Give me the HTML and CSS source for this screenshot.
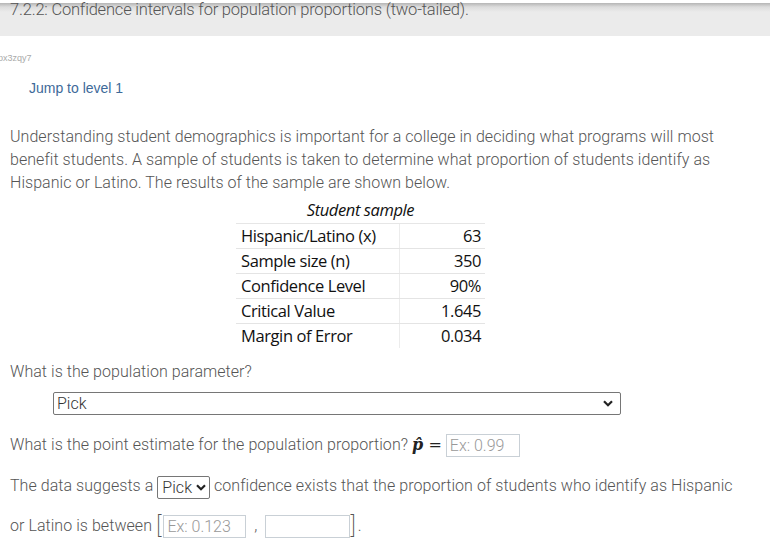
FILE: index.html
```html
<!DOCTYPE html>
<html>
<head>
<meta charset="utf-8">
<link rel="stylesheet" href="styles.css">
</head>
<body>
<div class="topbar">
  <h2 class="title">7.2.2: Confidence intervals for population proportions (two-tailed).</h2>
</div>
<div class="code">px3zqy7</div>
<a class="jump" href="#">Jump to level 1</a>
<div class="content">
  <p class="intro">Understanding student demographics is important for a college in deciding what programs will most benefit students. A sample of students is taken to determine what proportion of students identify as Hispanic or Latino. The results of the sample are shown below.</p>
  <div class="table-wrap">
    <table class="sample">
      <caption>Student sample</caption>
      <tr><td>Hispanic/Latino (x)</td><td class="num">63</td></tr>
      <tr><td>Sample size (n)</td><td class="num">350</td></tr>
      <tr><td>Confidence Level</td><td class="num">90%</td></tr>
      <tr><td>Critical Value</td><td class="num">1.645</td></tr>
      <tr><td>Margin of Error</td><td class="num">0.034</td></tr>
    </table>
  </div>
  <p class="q q1">What is the population parameter?</p>
  <div class="sel-row">
    <div class="select wide"><span>Pick</span><svg class="chev" viewBox="0 0 10 7" width="10" height="7"><path d="M1 1.2 L5 5.2 L9 1.2" fill="none" stroke="#222" stroke-width="2.2"/></svg></div>
  </div>
  <p class="q q2">What is the point estimate for the population proportion? <span class="math"><i>p&#770;</i> =</span> <span class="input w74 ph">Ex: 0.99</span></p>
  <p class="q q3">The data suggests a <span class="select small"><span>Pick</span><svg class="chev" viewBox="0 0 10 7" width="10" height="7"><path d="M1 1.2 L5 5.2 L9 1.2" fill="none" stroke="#222" stroke-width="2.2"/></svg></span> confidence exists that the proportion of students who identify as Hispanic</p>
  <p class="q q4">or Latino is between <span class="br">[</span><span class="input w83 ph">Ex: 0.123</span> <span class="comma">,</span> <span class="input w85"></span><span class="br">]</span>.</p>
</div>
</body>
</html>
```

FILE: styles.css
```css
html, body {
  margin: 0;
  padding: 0;
  background: #fff;
}
body {
  font-family: Roboto, "Liberation Sans", sans-serif;
  font-weight: 300;
  color: #555;
  overflow: hidden;
}
.topbar {
  margin-top: 3px;
  height: 33px;
  background: linear-gradient(#b5b5b5 0, #dcdcdc 4px, #ebebeb 9px, #ebebeb 100%);
}
.title {
  margin: 0;
  padding-left: 10px;
  font-size: 16.5px;
  font-weight: 300;
  line-height: 17px;
  letter-spacing: -0.2px;
  color: #555;
  transform: translateY(-2px);
}
.code {
  margin: 17px 0 0 -2px;
  font-size: 9px;
  color: #aaa;
  font-family: "Liberation Sans", Arial, sans-serif;
  font-weight: 400;
  line-height: 11px;
}
.jump {
  display: block;
  margin: 15px 0 0 29px;
  font-family: "Liberation Sans", Arial, sans-serif;
  font-weight: 400;
  font-size: 14px;
  line-height: 18px;
  color: #3e6a99;
  text-decoration: none;
}
.content {
  padding: 0 10px;
}
.intro {
  margin: 28px 0 0 0;
  width: 715px;
  font-size: 16px;
  line-height: 23px;
  letter-spacing: 0.05px;
}
.table-wrap {
  display: flex;
  padding-left: 226px;
  margin-top: 5px;
}
.sample {
  border-collapse: collapse;
  font-family: "Open Sans", Lato, sans-serif;
  font-weight: 400;
  font-size: 16.5px;
  color: #111;
  background: #fff;
}
.sample caption {
  font-style: italic;
  font-size: 16.5px;
  line-height: 22px;
  height: 24px;
  border-bottom: 1px solid #e6e6e6;
  text-align: center;
  letter-spacing: -0.4px;
}
.sample td {
  height: 24px;
  padding: 0 4px 0 5px;
  border-bottom: 1px solid #e4e4e4;
  line-height: 24px;
  letter-spacing: -0.4px;
}
.sample tr:last-child td {
  border-bottom: none;
}
.sample td:first-child {
  width: 154px;
  border-right: 1px solid #ececec;
}
.sample td.num {
  text-align: right;
  width: 76px;
}
.q {
  margin: 0;
  font-size: 16px;
  line-height: 22px;
  letter-spacing: 0.05px;
}
.q1 {
  margin-top: 13px;
}
.sel-row {
  margin: 9px 0 0 43px;
}
.select {
  display: inline-flex;
  align-items: center;
  justify-content: space-between;
  box-sizing: border-box;
  border: 1px solid #767676;
  border-radius: 2px;
  background: #fff;
  font-family: Roboto, "Liberation Sans", sans-serif;
  font-weight: 300;
  color: #333;
  vertical-align: middle;
}
.select.wide {
  width: 568px;
  height: 23px;
  padding: 0 7px 0 3px;
  font-size: 16px;
}
.select.small {
  height: 23px;
  padding: 0 3px 0 4px;
  font-size: 16px;
  gap: 4px;
}
.chev {
  display: block;
}
.q2 {
  margin-top: 19px;
}
.math {
  font-family: "DejaVu Serif", serif;
  font-weight: 400;
  color: #222;
}
.math i {
  font-weight: 700;
}
.input {
  display: inline-block;
  box-sizing: border-box;
  height: 23px;
  border: 1px solid #c9d0d6;
  vertical-align: middle;
  font-size: 16px;
  line-height: 21px;
  padding-left: 3px;
  color: #999;
  background: #fff;
  letter-spacing: 0;
}
.w74 { width: 74px; }
.w83 { width: 83px; }
.w85 { width: 85px; }
.q3 {
  margin-top: 17px;
  line-height: 23px;
}
.q4 {
  margin-top: 15px;
  line-height: 23px;
}
.br {
  font-size: 24px;
  font-weight: 200;
  vertical-align: -2px;
  line-height: 20px;
  margin-right: 2px;
}
.comma {
  margin: 0 4px;
}
```
